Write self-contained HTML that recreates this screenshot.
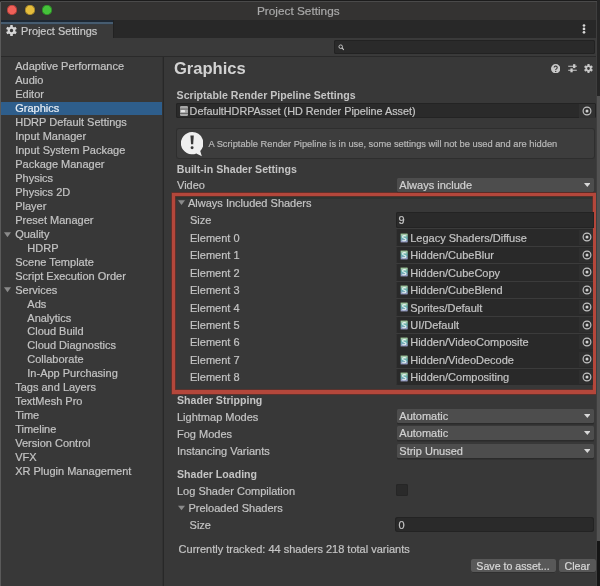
<!DOCTYPE html>
<html><head><meta charset="utf-8"><title>Project Settings</title>
<style>
html,body{margin:0;padding:0;width:600px;height:586px;overflow:hidden;background:#383838}
body{position:relative;font-family:"Liberation Sans", sans-serif}
#w,#w>div,#w>svg{position:absolute}
svg{display:block}
#w>div>svg{width:100%;height:100%}
.t{white-space:nowrap;line-height:20px;font-family:"Liberation Sans", sans-serif;-webkit-text-stroke:0.2px currentColor}
</style></head><body><div id="w" style="left:0;top:0;width:600px;height:586px;will-change:transform">
<div style="left:0.00px;top:0.00px;width:600.00px;height:586.00px;background:#383838;"></div>
<div style="left:0.00px;top:0.00px;width:600.00px;height:20.00px;background:#343332;"></div>
<div style="left:0.00px;top:0.00px;width:600.00px;height:1.00px;background:#1c1c1c;"></div>
<div style="left:1.00px;top:1.00px;width:596.00px;height:1.00px;background:#4a4a4a;"></div>
<div style="left:6.90px;top:4.90px;width:10.4px;height:10.4px;border-radius:50%;background:#ef6058;box-shadow:inset 0 0 0 0.6px #9a3530"></div>
<div style="left:24.60px;top:4.90px;width:10.4px;height:10.4px;border-radius:50%;background:#e6bd3c;box-shadow:inset 0 0 0 0.6px #8f7425"></div>
<div style="left:42.10px;top:4.90px;width:10.4px;height:10.4px;border-radius:50%;background:#45c23a;box-shadow:inset 0 0 0 0.6px #2a7a25"></div>
<div class="t" style="left:257.00px;top:1px;font-size:11.80px;color:#a9a9a9;">Project Settings</div>
<div style="left:0.00px;top:19.70px;width:600.00px;height:18.30px;background:#282828;"></div>
<div style="left:0.00px;top:21.00px;width:112.50px;height:17.00px;background:#3a3a3a;"></div>
<div style="left:0.00px;top:19.50px;width:112.50px;height:2.20px;background:#1e2833;"></div>
<div style="left:0.00px;top:21.70px;width:112.50px;height:2.00px;background:#465c70;"></div>
<div style="left:0.00px;top:23.70px;width:112.50px;height:0.90px;background:#363b40;"></div>
<div style="left:112.50px;top:20.00px;width:1.00px;height:18.00px;background:#222222;"></div>
<div style="left:6px;top:25px;width:11px;height:11px"><svg viewBox="0 0 20 20"><g fill="#d6d6d6"><path fill-rule="evenodd" d="M10 3a7 7 0 1 0 0 14 7 7 0 1 0 0-14zM10 6.9a3.1 3.1 0 1 0 0 6.2 3.1 3.1 0 1 0 0-6.2z"/><rect x="7.6" y="0.2" width="4.8" height="4.2" rx="1"/><rect x="7.6" y="15.8" width="4.8" height="4.2" rx="1"/><rect x="7.6" y="0.2" width="4.8" height="4.2" rx="1" transform="rotate(60 10 10)"/><rect x="7.6" y="15.8" width="4.8" height="4.2" rx="1" transform="rotate(60 10 10)"/><rect x="7.6" y="0.2" width="4.8" height="4.2" rx="1" transform="rotate(120 10 10)"/><rect x="7.6" y="15.8" width="4.8" height="4.2" rx="1" transform="rotate(120 10 10)"/></g></svg></div>
<div class="t" style="left:21.00px;top:21px;font-size:10.90px;color:#c8c8c8;">Project Settings</div>
<div style="left:0.00px;top:38.00px;width:600.00px;height:18.00px;background:#3a3a3a;"></div>
<div style="left:0.00px;top:56.00px;width:600.00px;height:1.00px;background:#2a2a2a;"></div>
<svg style="left:581.2px;top:22px;width:6px;height:14px" viewBox="0 0 6 14"><circle cx="3" cy="3.5" r="1.35" fill="#d8d8d8"/><circle cx="3" cy="6.9" r="1.35" fill="#d8d8d8"/><circle cx="3" cy="10.3" r="1.35" fill="#d8d8d8"/></svg>
<div style="left:333.5px;top:39.8px;width:261px;height:14.4px;background:#2a2a2a;border-radius:2px;box-shadow:inset 0 0 0 1px #222222"></div>
<svg style="left:337.6px;top:43.8px;width:6.8px;height:6.8px" viewBox="0 0 8 8"><circle cx="3.2" cy="3.2" r="2.1" fill="none" stroke="#c8c8c8" stroke-width="1.1"/><path d="M4.7 4.7L7 7" stroke="#c8c8c8" stroke-width="1.3"/></svg>
<div style="left:161.60px;top:57.00px;width:1.00px;height:529.00px;background:#323232;"></div>
<div style="left:162.60px;top:57.00px;width:1.40px;height:529.00px;background:#282828;"></div>
<div class="t" style="left:15.20px;top:56px;font-size:11.00px;color:#c4c4c4;">Adaptive Performance</div>
<div class="t" style="left:15.20px;top:70px;font-size:11.00px;color:#c4c4c4;">Audio</div>
<div class="t" style="left:15.20px;top:84px;font-size:11.00px;color:#c4c4c4;">Editor</div>
<div style="left:1.00px;top:101.95px;width:161.30px;height:13.00px;background:#2e5e8c;"></div>
<div class="t" style="left:15.20px;top:98px;font-size:11.00px;color:#e8eef5;">Graphics</div>
<div class="t" style="left:15.20px;top:112px;font-size:11.00px;color:#c4c4c4;">HDRP Default Settings</div>
<div class="t" style="left:15.20px;top:126px;font-size:11.00px;color:#c4c4c4;">Input Manager</div>
<div class="t" style="left:15.20px;top:140px;font-size:11.00px;color:#c4c4c4;">Input System Package</div>
<div class="t" style="left:15.20px;top:154px;font-size:11.00px;color:#c4c4c4;">Package Manager</div>
<div class="t" style="left:15.20px;top:168px;font-size:11.00px;color:#c4c4c4;">Physics</div>
<div class="t" style="left:15.20px;top:182px;font-size:11.00px;color:#c4c4c4;">Physics 2D</div>
<div class="t" style="left:15.20px;top:196px;font-size:11.00px;color:#c4c4c4;">Player</div>
<div class="t" style="left:15.20px;top:210px;font-size:11.00px;color:#c4c4c4;">Preset Manager</div>
<svg style="left:3.7px;top:231.50px;width:7px;height:5.4px" viewBox="0 0 7 5"><path d="M0 0H7L3.5 5z" fill="#8a8a8a"/></svg>
<div class="t" style="left:15.20px;top:224px;font-size:11.00px;color:#c4c4c4;">Quality</div>
<div class="t" style="left:27.30px;top:238px;font-size:11.00px;color:#c4c4c4;">HDRP</div>
<div class="t" style="left:15.20px;top:252px;font-size:11.00px;color:#c4c4c4;">Scene Template</div>
<div class="t" style="left:15.20px;top:266px;font-size:11.00px;color:#c4c4c4;">Script Execution Order</div>
<svg style="left:3.7px;top:287.30px;width:7px;height:5.4px" viewBox="0 0 7 5"><path d="M0 0H7L3.5 5z" fill="#8a8a8a"/></svg>
<div class="t" style="left:15.20px;top:280px;font-size:11.00px;color:#c4c4c4;">Services</div>
<div class="t" style="left:27.30px;top:294px;font-size:11.00px;color:#c4c4c4;">Ads</div>
<div class="t" style="left:27.30px;top:308px;font-size:11.00px;color:#c4c4c4;">Analytics</div>
<div class="t" style="left:27.30px;top:321px;font-size:11.00px;color:#c4c4c4;">Cloud Build</div>
<div class="t" style="left:27.30px;top:335px;font-size:11.00px;color:#c4c4c4;">Cloud Diagnostics</div>
<div class="t" style="left:27.30px;top:349px;font-size:11.00px;color:#c4c4c4;">Collaborate</div>
<div class="t" style="left:27.30px;top:363px;font-size:11.00px;color:#c4c4c4;">In-App Purchasing</div>
<div class="t" style="left:15.20px;top:377px;font-size:11.00px;color:#c4c4c4;">Tags and Layers</div>
<div class="t" style="left:15.20px;top:391px;font-size:11.00px;color:#c4c4c4;">TextMesh Pro</div>
<div class="t" style="left:15.20px;top:405px;font-size:11.00px;color:#c4c4c4;">Time</div>
<div class="t" style="left:15.20px;top:419px;font-size:11.00px;color:#c4c4c4;">Timeline</div>
<div class="t" style="left:15.20px;top:433px;font-size:11.00px;color:#c4c4c4;">Version Control</div>
<div class="t" style="left:15.20px;top:447px;font-size:11.00px;color:#c4c4c4;">VFX</div>
<div class="t" style="left:15.20px;top:461px;font-size:11.00px;color:#c4c4c4;">XR Plugin Management</div>
<div class="t" style="left:173.90px;top:59px;font-size:16.60px;font-weight:bold;-webkit-text-stroke:0;color:#d2d2d2;">Graphics</div>
<svg style="left:550.8px;top:64.1px;width:9.4px;height:9.4px" viewBox="0 0 10 10"><circle cx="5" cy="5" r="5" fill="#c8c8c8"/><path d="M3.4 3.8a1.6 1.6 0 1 1 2.4 1.4c-.6.35-.8.6-.8 1.2" fill="none" stroke="#383838" stroke-width="1.2"/><circle cx="5" cy="7.9" r=".7" fill="#383838"/></svg>
<svg style="left:567.6px;top:64.4px;width:9px;height:8.6px" viewBox="0 0 9 9"><path d="M0 2.3H9M0 6.6H9" stroke="#c8c8c8" stroke-width="1.1"/><rect x="5.1" y=".2" width="2.4" height="4.1" fill="#cccccc"/><rect x="2.3" y="4.6" width="2.4" height="4.1" fill="#cccccc"/></svg>
<div style="left:584.1px;top:64.2px;width:9px;height:9px"><svg viewBox="0 0 20 20"><g fill="#c8c8c8"><path fill-rule="evenodd" d="M10 3a7 7 0 1 0 0 14 7 7 0 1 0 0-14zM10 6.9a3.1 3.1 0 1 0 0 6.2 3.1 3.1 0 1 0 0-6.2z"/><rect x="7.6" y="0.2" width="4.8" height="4.2" rx="1"/><rect x="7.6" y="15.8" width="4.8" height="4.2" rx="1"/><rect x="7.6" y="0.2" width="4.8" height="4.2" rx="1" transform="rotate(60 10 10)"/><rect x="7.6" y="15.8" width="4.8" height="4.2" rx="1" transform="rotate(60 10 10)"/><rect x="7.6" y="0.2" width="4.8" height="4.2" rx="1" transform="rotate(120 10 10)"/><rect x="7.6" y="15.8" width="4.8" height="4.2" rx="1" transform="rotate(120 10 10)"/></g></svg></div>
<div class="t" style="left:176.60px;top:85px;font-size:10.60px;font-weight:bold;-webkit-text-stroke:0;color:#c4c4c4;">Scriptable Render Pipeline Settings</div>
<div style="left:176px;top:103px;width:419.7px;height:15.3px;background:#2a2a2a;border-radius:2px;box-shadow:inset 0 0 0 1px #232323"></div>
<div style="left:579.00px;top:103.80px;width:16.00px;height:13.80px;background:#313131;"></div>
<svg style="left:179.5px;top:106px;width:8px;height:10px" viewBox="0 0 8 10"><rect x="0" y="0" width="8" height="10" rx="1.2" fill="#a8a8a8"/><rect x="0" y="2.6" width="8" height="0.9" fill="#5a5a5a"/><rect x="0" y="6.9" width="8" height="0.9" fill="#5a5a5a"/><rect x="1" y="4.1" width="4" height="2.2" rx=".6" fill="#e6e6e6"/></svg>
<div class="t" style="left:189.60px;top:101px;font-size:10.80px;color:#c4c4c4;">DefaultHDRPAsset (HD Render Pipeline Asset)</div>
<svg style="left:581.80px;top:105.60px;width:10px;height:10px" viewBox="0 0 10 10"><circle cx="5" cy="5" r="3.9" fill="none" stroke="#c4c4c4" stroke-width="1.15"/><circle cx="5" cy="5" r="1.5" fill="#d0d0d0"/></svg>
<div style="left:176px;top:128px;width:418.8px;height:31px;background:#3d3d3d;border-radius:3px;box-shadow:inset 0 0 0 1px #2e2e2e"></div>
<svg style="left:180.9px;top:132.1px;width:22.6px;height:24.6px" viewBox="0 0 23 25"><path d="M11.2 0.1A11.3 11.3 0 1 0 15.6 21.8L21.2 24.6 19.6 19.2A11.3 11.3 0 0 0 11.2 0.1z" fill="#f0f0f0"/><path d="M9.6 3.5h3.4l-.6 8.9h-2.2z" fill="#3a3a3a"/><circle cx="11.3" cy="16.1" r="1.5" fill="#3a3a3a"/></svg>
<div class="t" style="left:208.40px;top:134px;font-size:9.30px;color:#b8b8b8;">A Scriptable Render Pipeline is in use, some settings will not be used and are hidden</div>
<div class="t" style="left:176.80px;top:159px;font-size:10.60px;font-weight:bold;-webkit-text-stroke:0;color:#c4c4c4;">Built-in Shader Settings</div>
<div class="t" style="left:177.00px;top:175px;font-size:11.00px;color:#c4c4c4;">Video</div>
<div style="left:396.6px;top:177.50px;width:197.8px;height:14.30px;background:#4d4d4d;border-radius:1.5px;box-shadow:0 1.6px 0 #2b2b2b"></div>
<div class="t" style="left:399.30px;top:175px;font-size:11.00px;color:#d2d2d2;">Always include</div>
<svg style="left:583.8px;top:182.65px;width:6.6px;height:4px" viewBox="0 0 7 4"><path d="M0 0H7L3.5 4z" fill="#d8d8d8"/></svg>
<div style="left:175.00px;top:196.00px;width:418.00px;height:2.50px;background:#2f3431;"></div>
<div style="left:171.7px;top:192.5px;width:424.5px;height:201.3px;box-sizing:border-box;border:3.5px solid #b4473b;border-bottom-width:4.8px;border-top-width:3.9px;box-shadow:0 0 0 .6px #7a2e25, inset 0 0 0 .6px #7a2e25"></div>
<svg style="left:177.7px;top:200px;width:7px;height:5.2px" viewBox="0 0 6 4"><path d="M0 0H6L3 4z" fill="#8a8a8a"/></svg>
<div class="t" style="left:188.00px;top:193px;font-size:11.00px;color:#c4c4c4;">Always Included Shaders</div>
<div class="t" style="left:190.00px;top:210px;font-size:11.00px;color:#c4c4c4;">Size</div>
<div style="left:396px;top:211.6px;width:197.6px;height:16.4px;background:#2a2a2a;border-radius:2px 0 0 2px;box-shadow:inset 0 0 0 1px #232323"></div>
<div class="t" style="left:398.60px;top:210px;font-size:11.00px;color:#c4c4c4;">9</div>
<div class="t" style="left:190.00px;top:228px;font-size:11.00px;color:#c4c4c4;">Element 0</div>
<div style="left:396.00px;top:228.40px;width:197.40px;height:0.90px;background:#3b3b3b;"></div>
<div style="left:396px;top:229.30px;width:197.4px;height:16.5px;background:#292929;border-radius:1px;box-shadow:inset 1px 0 0 #333333"></div>
<div style="left:579.00px;top:230.10px;width:14.40px;height:14.60px;background:#2e2e2e;"></div>
<svg style="left:399.5px;top:232.50px;width:8.4px;height:10px" viewBox="0 0 8.4 10"><defs><linearGradient id="g0" x1="0" y1="0" x2="0" y2="1"><stop offset="0" stop-color="#b3cd9c"/><stop offset=".5" stop-color="#62aeb0"/><stop offset="1" stop-color="#a596c8"/></linearGradient></defs><rect x=".3" y=".3" width="7.8" height="9.4" rx="1.3" fill="url(#g0)" stroke="#25302e" stroke-width=".6"/><path d="M5.9 3.1C5.3 2.4 2.6 2.4 2.6 3.9S5.9 5.1 5.9 6.6 3.1 8 2.5 7.3" fill="none" stroke="#e4f2f0" stroke-width="1.15"/></svg>
<div class="t" style="left:410.20px;top:228px;font-size:11.00px;color:#c4c4c4;">Legacy Shaders/Diffuse</div>
<svg style="left:581.50px;top:232.30px;width:10px;height:10px" viewBox="0 0 10 10"><circle cx="5" cy="5" r="3.9" fill="none" stroke="#c4c4c4" stroke-width="1.15"/><circle cx="5" cy="5" r="1.5" fill="#d0d0d0"/></svg>
<div class="t" style="left:190.00px;top:245px;font-size:11.00px;color:#c4c4c4;">Element 1</div>
<div style="left:396.00px;top:245.85px;width:197.40px;height:0.90px;background:#3b3b3b;"></div>
<div style="left:396px;top:246.75px;width:197.4px;height:16.5px;background:#292929;border-radius:1px;box-shadow:inset 1px 0 0 #333333"></div>
<div style="left:579.00px;top:247.55px;width:14.40px;height:14.60px;background:#2e2e2e;"></div>
<svg style="left:399.5px;top:249.95px;width:8.4px;height:10px" viewBox="0 0 8.4 10"><defs><linearGradient id="g1" x1="0" y1="0" x2="0" y2="1"><stop offset="0" stop-color="#b3cd9c"/><stop offset=".5" stop-color="#62aeb0"/><stop offset="1" stop-color="#a596c8"/></linearGradient></defs><rect x=".3" y=".3" width="7.8" height="9.4" rx="1.3" fill="url(#g1)" stroke="#25302e" stroke-width=".6"/><path d="M5.9 3.1C5.3 2.4 2.6 2.4 2.6 3.9S5.9 5.1 5.9 6.6 3.1 8 2.5 7.3" fill="none" stroke="#e4f2f0" stroke-width="1.15"/></svg>
<div class="t" style="left:410.20px;top:245px;font-size:11.00px;color:#c4c4c4;">Hidden/CubeBlur</div>
<svg style="left:581.50px;top:249.75px;width:10px;height:10px" viewBox="0 0 10 10"><circle cx="5" cy="5" r="3.9" fill="none" stroke="#c4c4c4" stroke-width="1.15"/><circle cx="5" cy="5" r="1.5" fill="#d0d0d0"/></svg>
<div class="t" style="left:190.00px;top:263px;font-size:11.00px;color:#c4c4c4;">Element 2</div>
<div style="left:396.00px;top:263.30px;width:197.40px;height:0.90px;background:#3b3b3b;"></div>
<div style="left:396px;top:264.20px;width:197.4px;height:16.5px;background:#292929;border-radius:1px;box-shadow:inset 1px 0 0 #333333"></div>
<div style="left:579.00px;top:265.00px;width:14.40px;height:14.60px;background:#2e2e2e;"></div>
<svg style="left:399.5px;top:267.40px;width:8.4px;height:10px" viewBox="0 0 8.4 10"><defs><linearGradient id="g2" x1="0" y1="0" x2="0" y2="1"><stop offset="0" stop-color="#b3cd9c"/><stop offset=".5" stop-color="#62aeb0"/><stop offset="1" stop-color="#a596c8"/></linearGradient></defs><rect x=".3" y=".3" width="7.8" height="9.4" rx="1.3" fill="url(#g2)" stroke="#25302e" stroke-width=".6"/><path d="M5.9 3.1C5.3 2.4 2.6 2.4 2.6 3.9S5.9 5.1 5.9 6.6 3.1 8 2.5 7.3" fill="none" stroke="#e4f2f0" stroke-width="1.15"/></svg>
<div class="t" style="left:410.20px;top:263px;font-size:11.00px;color:#c4c4c4;">Hidden/CubeCopy</div>
<svg style="left:581.50px;top:267.20px;width:10px;height:10px" viewBox="0 0 10 10"><circle cx="5" cy="5" r="3.9" fill="none" stroke="#c4c4c4" stroke-width="1.15"/><circle cx="5" cy="5" r="1.5" fill="#d0d0d0"/></svg>
<div class="t" style="left:190.00px;top:280px;font-size:11.00px;color:#c4c4c4;">Element 3</div>
<div style="left:396.00px;top:280.75px;width:197.40px;height:0.90px;background:#3b3b3b;"></div>
<div style="left:396px;top:281.65px;width:197.4px;height:16.5px;background:#292929;border-radius:1px;box-shadow:inset 1px 0 0 #333333"></div>
<div style="left:579.00px;top:282.45px;width:14.40px;height:14.60px;background:#2e2e2e;"></div>
<svg style="left:399.5px;top:284.85px;width:8.4px;height:10px" viewBox="0 0 8.4 10"><defs><linearGradient id="g3" x1="0" y1="0" x2="0" y2="1"><stop offset="0" stop-color="#b3cd9c"/><stop offset=".5" stop-color="#62aeb0"/><stop offset="1" stop-color="#a596c8"/></linearGradient></defs><rect x=".3" y=".3" width="7.8" height="9.4" rx="1.3" fill="url(#g3)" stroke="#25302e" stroke-width=".6"/><path d="M5.9 3.1C5.3 2.4 2.6 2.4 2.6 3.9S5.9 5.1 5.9 6.6 3.1 8 2.5 7.3" fill="none" stroke="#e4f2f0" stroke-width="1.15"/></svg>
<div class="t" style="left:410.20px;top:280px;font-size:11.00px;color:#c4c4c4;">Hidden/CubeBlend</div>
<svg style="left:581.50px;top:284.65px;width:10px;height:10px" viewBox="0 0 10 10"><circle cx="5" cy="5" r="3.9" fill="none" stroke="#c4c4c4" stroke-width="1.15"/><circle cx="5" cy="5" r="1.5" fill="#d0d0d0"/></svg>
<div class="t" style="left:190.00px;top:298px;font-size:11.00px;color:#c4c4c4;">Element 4</div>
<div style="left:396.00px;top:298.20px;width:197.40px;height:0.90px;background:#3b3b3b;"></div>
<div style="left:396px;top:299.10px;width:197.4px;height:16.5px;background:#292929;border-radius:1px;box-shadow:inset 1px 0 0 #333333"></div>
<div style="left:579.00px;top:299.90px;width:14.40px;height:14.60px;background:#2e2e2e;"></div>
<svg style="left:399.5px;top:302.30px;width:8.4px;height:10px" viewBox="0 0 8.4 10"><defs><linearGradient id="g4" x1="0" y1="0" x2="0" y2="1"><stop offset="0" stop-color="#b3cd9c"/><stop offset=".5" stop-color="#62aeb0"/><stop offset="1" stop-color="#a596c8"/></linearGradient></defs><rect x=".3" y=".3" width="7.8" height="9.4" rx="1.3" fill="url(#g4)" stroke="#25302e" stroke-width=".6"/><path d="M5.9 3.1C5.3 2.4 2.6 2.4 2.6 3.9S5.9 5.1 5.9 6.6 3.1 8 2.5 7.3" fill="none" stroke="#e4f2f0" stroke-width="1.15"/></svg>
<div class="t" style="left:410.20px;top:298px;font-size:11.00px;color:#c4c4c4;">Sprites/Default</div>
<svg style="left:581.50px;top:302.10px;width:10px;height:10px" viewBox="0 0 10 10"><circle cx="5" cy="5" r="3.9" fill="none" stroke="#c4c4c4" stroke-width="1.15"/><circle cx="5" cy="5" r="1.5" fill="#d0d0d0"/></svg>
<div class="t" style="left:190.00px;top:315px;font-size:11.00px;color:#c4c4c4;">Element 5</div>
<div style="left:396.00px;top:315.65px;width:197.40px;height:0.90px;background:#3b3b3b;"></div>
<div style="left:396px;top:316.55px;width:197.4px;height:16.5px;background:#292929;border-radius:1px;box-shadow:inset 1px 0 0 #333333"></div>
<div style="left:579.00px;top:317.35px;width:14.40px;height:14.60px;background:#2e2e2e;"></div>
<svg style="left:399.5px;top:319.75px;width:8.4px;height:10px" viewBox="0 0 8.4 10"><defs><linearGradient id="g5" x1="0" y1="0" x2="0" y2="1"><stop offset="0" stop-color="#b3cd9c"/><stop offset=".5" stop-color="#62aeb0"/><stop offset="1" stop-color="#a596c8"/></linearGradient></defs><rect x=".3" y=".3" width="7.8" height="9.4" rx="1.3" fill="url(#g5)" stroke="#25302e" stroke-width=".6"/><path d="M5.9 3.1C5.3 2.4 2.6 2.4 2.6 3.9S5.9 5.1 5.9 6.6 3.1 8 2.5 7.3" fill="none" stroke="#e4f2f0" stroke-width="1.15"/></svg>
<div class="t" style="left:410.20px;top:315px;font-size:11.00px;color:#c4c4c4;">UI/Default</div>
<svg style="left:581.50px;top:319.55px;width:10px;height:10px" viewBox="0 0 10 10"><circle cx="5" cy="5" r="3.9" fill="none" stroke="#c4c4c4" stroke-width="1.15"/><circle cx="5" cy="5" r="1.5" fill="#d0d0d0"/></svg>
<div class="t" style="left:190.00px;top:332px;font-size:11.00px;color:#c4c4c4;">Element 6</div>
<div style="left:396.00px;top:333.10px;width:197.40px;height:0.90px;background:#3b3b3b;"></div>
<div style="left:396px;top:334.00px;width:197.4px;height:16.5px;background:#292929;border-radius:1px;box-shadow:inset 1px 0 0 #333333"></div>
<div style="left:579.00px;top:334.80px;width:14.40px;height:14.60px;background:#2e2e2e;"></div>
<svg style="left:399.5px;top:337.20px;width:8.4px;height:10px" viewBox="0 0 8.4 10"><defs><linearGradient id="g6" x1="0" y1="0" x2="0" y2="1"><stop offset="0" stop-color="#b3cd9c"/><stop offset=".5" stop-color="#62aeb0"/><stop offset="1" stop-color="#a596c8"/></linearGradient></defs><rect x=".3" y=".3" width="7.8" height="9.4" rx="1.3" fill="url(#g6)" stroke="#25302e" stroke-width=".6"/><path d="M5.9 3.1C5.3 2.4 2.6 2.4 2.6 3.9S5.9 5.1 5.9 6.6 3.1 8 2.5 7.3" fill="none" stroke="#e4f2f0" stroke-width="1.15"/></svg>
<div class="t" style="left:410.20px;top:332px;font-size:11.00px;color:#c4c4c4;">Hidden/VideoComposite</div>
<svg style="left:581.50px;top:337.00px;width:10px;height:10px" viewBox="0 0 10 10"><circle cx="5" cy="5" r="3.9" fill="none" stroke="#c4c4c4" stroke-width="1.15"/><circle cx="5" cy="5" r="1.5" fill="#d0d0d0"/></svg>
<div class="t" style="left:190.00px;top:350px;font-size:11.00px;color:#c4c4c4;">Element 7</div>
<div style="left:396.00px;top:350.55px;width:197.40px;height:0.90px;background:#3b3b3b;"></div>
<div style="left:396px;top:351.45px;width:197.4px;height:16.5px;background:#292929;border-radius:1px;box-shadow:inset 1px 0 0 #333333"></div>
<div style="left:579.00px;top:352.25px;width:14.40px;height:14.60px;background:#2e2e2e;"></div>
<svg style="left:399.5px;top:354.65px;width:8.4px;height:10px" viewBox="0 0 8.4 10"><defs><linearGradient id="g7" x1="0" y1="0" x2="0" y2="1"><stop offset="0" stop-color="#b3cd9c"/><stop offset=".5" stop-color="#62aeb0"/><stop offset="1" stop-color="#a596c8"/></linearGradient></defs><rect x=".3" y=".3" width="7.8" height="9.4" rx="1.3" fill="url(#g7)" stroke="#25302e" stroke-width=".6"/><path d="M5.9 3.1C5.3 2.4 2.6 2.4 2.6 3.9S5.9 5.1 5.9 6.6 3.1 8 2.5 7.3" fill="none" stroke="#e4f2f0" stroke-width="1.15"/></svg>
<div class="t" style="left:410.20px;top:350px;font-size:11.00px;color:#c4c4c4;">Hidden/VideoDecode</div>
<svg style="left:581.50px;top:354.45px;width:10px;height:10px" viewBox="0 0 10 10"><circle cx="5" cy="5" r="3.9" fill="none" stroke="#c4c4c4" stroke-width="1.15"/><circle cx="5" cy="5" r="1.5" fill="#d0d0d0"/></svg>
<div class="t" style="left:190.00px;top:367px;font-size:11.00px;color:#c4c4c4;">Element 8</div>
<div style="left:396.00px;top:368.00px;width:197.40px;height:0.90px;background:#3b3b3b;"></div>
<div style="left:396px;top:368.90px;width:197.4px;height:16.5px;background:#292929;border-radius:1px;box-shadow:inset 1px 0 0 #333333"></div>
<div style="left:579.00px;top:369.70px;width:14.40px;height:14.60px;background:#2e2e2e;"></div>
<svg style="left:399.5px;top:372.10px;width:8.4px;height:10px" viewBox="0 0 8.4 10"><defs><linearGradient id="g8" x1="0" y1="0" x2="0" y2="1"><stop offset="0" stop-color="#b3cd9c"/><stop offset=".5" stop-color="#62aeb0"/><stop offset="1" stop-color="#a596c8"/></linearGradient></defs><rect x=".3" y=".3" width="7.8" height="9.4" rx="1.3" fill="url(#g8)" stroke="#25302e" stroke-width=".6"/><path d="M5.9 3.1C5.3 2.4 2.6 2.4 2.6 3.9S5.9 5.1 5.9 6.6 3.1 8 2.5 7.3" fill="none" stroke="#e4f2f0" stroke-width="1.15"/></svg>
<div class="t" style="left:410.20px;top:367px;font-size:11.00px;color:#c4c4c4;">Hidden/Compositing</div>
<svg style="left:581.50px;top:371.90px;width:10px;height:10px" viewBox="0 0 10 10"><circle cx="5" cy="5" r="3.9" fill="none" stroke="#c4c4c4" stroke-width="1.15"/><circle cx="5" cy="5" r="1.5" fill="#d0d0d0"/></svg>
<div class="t" style="left:177.00px;top:390px;font-size:10.60px;font-weight:bold;-webkit-text-stroke:0;color:#c4c4c4;">Shader Stripping</div>
<div class="t" style="left:177.00px;top:407px;font-size:11.00px;color:#c4c4c4;">Lightmap Modes</div>
<div style="left:396.6px;top:408.90px;width:197.8px;height:14.30px;background:#4d4d4d;border-radius:1.5px;box-shadow:0 1.6px 0 #2b2b2b"></div>
<div class="t" style="left:399.30px;top:406px;font-size:11.00px;color:#d2d2d2;">Automatic</div>
<svg style="left:583.8px;top:414.05px;width:6.6px;height:4px" viewBox="0 0 7 4"><path d="M0 0H7L3.5 4z" fill="#d8d8d8"/></svg>
<div class="t" style="left:177.00px;top:424px;font-size:11.00px;color:#c4c4c4;">Fog Modes</div>
<div style="left:396.6px;top:425.90px;width:197.8px;height:14.30px;background:#4d4d4d;border-radius:1.5px;box-shadow:0 1.6px 0 #2b2b2b"></div>
<div class="t" style="left:399.30px;top:423px;font-size:11.00px;color:#d2d2d2;">Automatic</div>
<svg style="left:583.8px;top:431.05px;width:6.6px;height:4px" viewBox="0 0 7 4"><path d="M0 0H7L3.5 4z" fill="#d8d8d8"/></svg>
<div class="t" style="left:177.00px;top:441px;font-size:11.00px;color:#c4c4c4;">Instancing Variants</div>
<div style="left:396.6px;top:443.70px;width:197.8px;height:14.30px;background:#4d4d4d;border-radius:1.5px;box-shadow:0 1.6px 0 #2b2b2b"></div>
<div class="t" style="left:399.30px;top:441px;font-size:11.00px;color:#d2d2d2;">Strip Unused</div>
<svg style="left:583.8px;top:448.85px;width:6.6px;height:4px" viewBox="0 0 7 4"><path d="M0 0H7L3.5 4z" fill="#d8d8d8"/></svg>
<div class="t" style="left:177.00px;top:464px;font-size:10.60px;font-weight:bold;-webkit-text-stroke:0;color:#c4c4c4;">Shader Loading</div>
<div class="t" style="left:177.00px;top:481px;font-size:11.00px;color:#c4c4c4;">Log Shader Compilation</div>
<div style="left:395.6px;top:483.9px;width:12px;height:12px;background:#2a2a2a;border-radius:2px;box-shadow:inset 0 0 0 1px #262626"></div>
<svg style="left:177.9px;top:504.6px;width:7px;height:6px" viewBox="0 0 6 4"><path d="M0 0H6L3 4z" fill="#8a8a8a"/></svg>
<div class="t" style="left:188.50px;top:498px;font-size:11.00px;color:#c4c4c4;">Preloaded Shaders</div>
<div class="t" style="left:189.60px;top:515px;font-size:11.00px;color:#c4c4c4;">Size</div>
<div style="left:395.2px;top:516.6px;width:199px;height:15.7px;background:#2a2a2a;border-radius:3px;box-shadow:inset 0 0 0 1px #232323"></div>
<div class="t" style="left:398.60px;top:515px;font-size:11.00px;color:#c4c4c4;">0</div>
<div class="t" style="left:178.60px;top:539px;font-size:11.00px;color:#c4c4c4;">Currently tracked: 44 shaders 218 total variants</div>
<div style="left:470.5px;top:559.1px;width:85.1px;height:13.5px;background:#585858;border-radius:2px;box-shadow:inset 0 -1px 0 #303030"></div>
<div class="t" style="left:476.30px;top:556px;font-size:10.65px;color:#d8d8d8;">Save to asset...</div>
<div style="left:558.5px;top:559.1px;width:37px;height:13.5px;background:#585858;border-radius:2px;box-shadow:inset 0 -1px 0 #303030"></div>
<div class="t" style="left:564.50px;top:556px;font-size:10.70px;color:#d8d8d8;">Clear</div>
<div style="left:0.00px;top:2.00px;width:1.00px;height:584.00px;background:#5a5a5a;"></div>
<div style="left:596.30px;top:2.00px;width:1.10px;height:584.00px;background:#3e3e3e;"></div>
<div style="left:597.40px;top:0.00px;width:2.60px;height:96.00px;background:#262626;"></div>
<div style="left:597.40px;top:96.00px;width:2.60px;height:445.00px;background:#525252;"></div>
<div style="left:597.40px;top:541.00px;width:2.60px;height:45.00px;background:#161616;"></div>
</div></body></html>
